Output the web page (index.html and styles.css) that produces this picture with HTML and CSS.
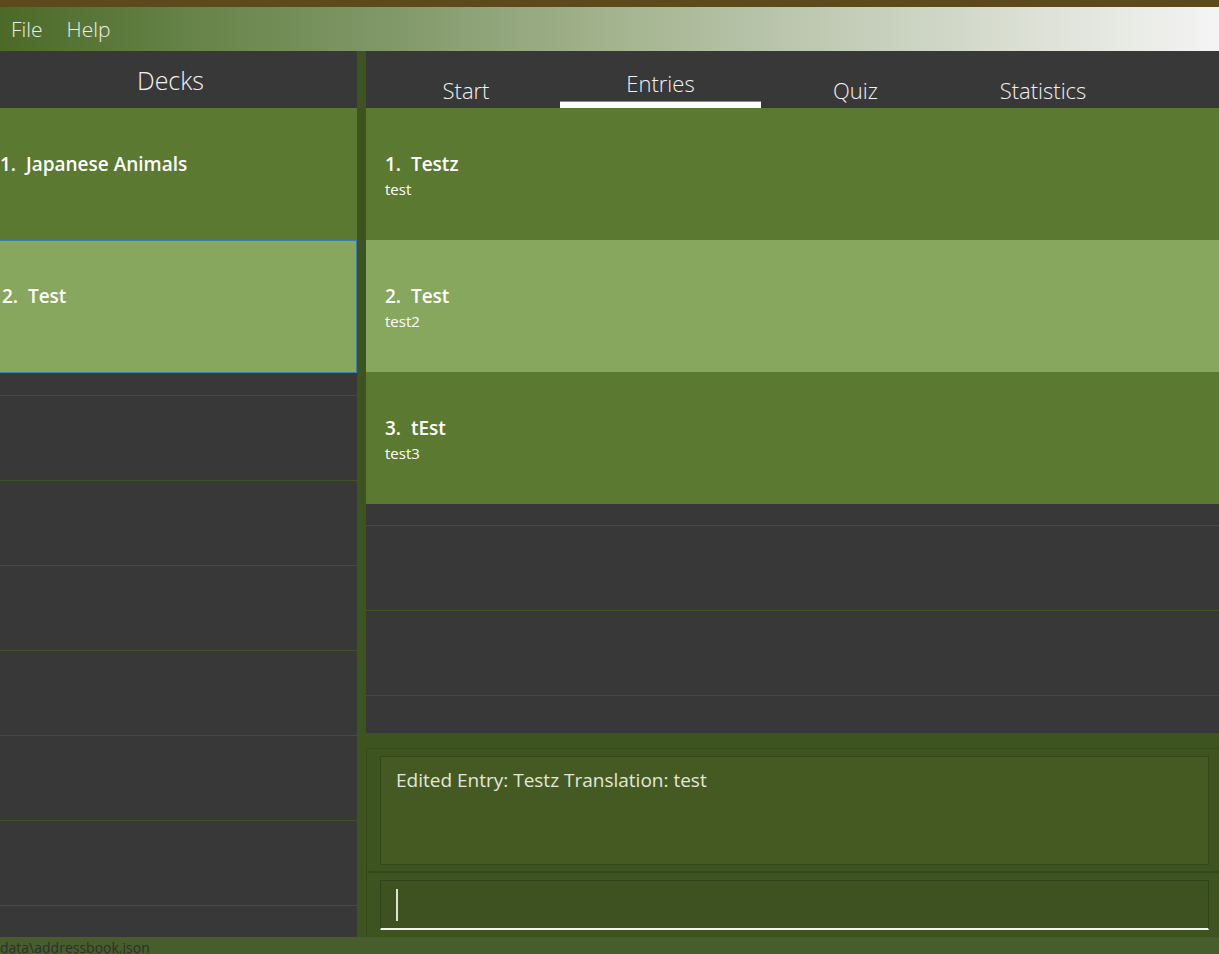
FILE: index.html
```html
<!DOCTYPE html>
<html lang="en">
<head>
<meta charset="utf-8">
<title>Decks</title>
<link rel="stylesheet" href="styles.css">
</head>
<body>
<div class="topbar"></div>
<div class="menubar">
  <span class="menu-item">File</span>
  <span class="menu-item">Help</span>
</div>
<div class="main">
  <div class="left">
    <div class="panel-header">Decks</div>
    <div class="list">
      <div class="cell green"><div class="title">1.&nbsp;&nbsp;Japanese Animals</div></div>
      <div class="cell light selected"><div class="title">2.&nbsp;&nbsp;Test</div></div>
      <div class="empty first left-first"></div>
      <div class="empty"></div>
      <div class="empty"></div>
      <div class="empty"></div>
      <div class="empty"></div>
      <div class="empty"></div>
      <div class="empty"></div>
    </div>
  </div>
  <div class="right">
    <div class="tabs">
      <div class="tab tab-start">Start</div>
      <div class="tab active">Entries</div>
      <div class="tab">Quiz</div>
      <div class="tab">Statistics</div>
    </div>
    <div class="list entries">
      <div class="cell green entry"><div class="title">1.&nbsp;&nbsp;Testz</div><div class="sub">test</div></div>
      <div class="cell light entry"><div class="title">2.&nbsp;&nbsp;Test</div><div class="sub">test2</div></div>
      <div class="cell green entry"><div class="title">3.&nbsp;&nbsp;tEst</div><div class="sub">test3</div></div>
      <div class="empty first"></div>
      <div class="empty"></div>
      <div class="empty"></div>
    </div>
    <div class="result-wrap">
      <div class="result-box">Edited Entry: Testz Translation: test</div>
    </div>
    <div class="command-wrap">
      <div class="command-box"><span class="caret"></span></div>
    </div>
  </div>
</div>
<div class="status">data\addressbook.json</div>
</body>
</html>
```
FILE: styles.css
```css
html, body {
  margin: 0;
  padding: 0;
}
body {
  width: 1219px;
  height: 954px;
  overflow: hidden;
  background: #3d5421;
  font-family: "Open Sans", "Noto Sans", sans-serif;
}
.topbar {
  height: 7px;
  background: #5c4a1c;
}
.menubar {
  height: 44px;
  display: flex;
  align-items: center;
  padding-left: 11px;
  gap: 24px;
  background: linear-gradient(to right, #4b6a27 0%, #68844a 16.4%, #82996a 32.8%, #a3b38e 50%, #bcc7af 65.6%, #d8ddd0 82%, #f4f4f4 100%);
}
.menu-item {
  font-size: 21px;
  font-weight: 300;
  color: #ececec;
  line-height: 24px;
}
.main {
  height: 886px;
  display: flex;
  gap: 9px;
  background: #3d5421;
}
.left {
  width: 357px;
  display: flex;
  flex-direction: column;
}
.panel-header {
  height: 57px;
  background: #383838;
  color: #f2f2f2;
  font-size: 25px;
  font-weight: 300;
  display: flex;
  align-items: center;
  justify-content: center;
  padding-right: 16px;
}
.list {
  flex: 1;
  background: #383838;
  display: flex;
  flex-direction: column;
}
.cell {
  height: 132px;
  box-sizing: border-box;
  padding-top: 44px;
  color: #ffffff;
  flex-shrink: 0;
}
.cell.green {
  background: #5b7931;
}
.cell.light {
  background: #87a65e;
}
.cell.selected {
  height: 133px;
  border-top: 1px solid #3c7fae;
  border-right: 1px solid #3c7fae;
  border-bottom: 1px solid #3c7fae;
  padding-top: 43px;
  padding-left: 2px;
}
.title {
  font-size: 19px;
  font-weight: 600;
  line-height: 24px;
}
.sub {
  font-size: 15px;
  line-height: 20px;
  margin-top: 3px;
}
.entry {
  padding-left: 19px;
}
.empty {
  height: 85px;
  box-sizing: border-box;
  border-bottom: 1px solid #3f5228;
  flex-shrink: 0;
}
.empty.first {
  height: 22px;
}
.empty.left-first {
  height: 23px;
}
.right {
  flex: 1;
  display: flex;
  flex-direction: column;
}
.tabs {
  height: 57px;
  background: #383838;
  display: grid;
  grid-template-columns: 194px 201px 189px 186px;
}
.tab {
  box-sizing: border-box;
  height: 57px;
  text-align: center;
  color: #f2f2f2;
  font-size: 22px;
  font-weight: 300;
  line-height: 28px;
  padding-top: 25px;
}
.tab-start {
  padding-left: 6px;
}
.tab.active {
  padding-top: 18px;
  border-bottom: 6px solid #ffffff;
  box-shadow: inset 0 -1px 0 #8a8a8a;
}
.entries {
  flex: none;
  height: 625px;
  overflow: hidden;
}
.result-wrap {
  margin-top: 15px;
  height: 125px;
  box-sizing: border-box;
  border-top: 1px solid #36491c;
  border-left: 1px solid #36491c;
  border-bottom: 2px solid #36491c;
  padding: 7px 10px 0 13px;
  background: #3e5420;
}
.result-box {
  height: 109px;
  box-sizing: border-box;
  border: 1px solid #34471b;
  background: #455a22;
  color: #e4e6dc;
  font-size: 19px;
  line-height: 24px;
  padding: 11px 0 0 15px;
}
.command-wrap {
  height: 64px;
  box-sizing: border-box;
  border-left: 1px solid #36491c;
  padding: 7px 10px 0 13px;
  background: #3e5420;
}
.command-box {
  height: 50px;
  box-sizing: border-box;
  border: 1px solid #2f4419;
  border-bottom: 2px solid #f2f2f2;
  background: #3d5220;
  padding: 8px 0 0 15px;
}
.caret {
  display: block;
  width: 2px;
  height: 32px;
  background: #dfe3d6;
}
.status {
  height: 17px;
  overflow: hidden;
  box-sizing: border-box;
  background: #485d2c;
  color: #2e2e2e;
  font-size: 14px;
  line-height: 17px;
  padding-top: 2px;
}
```
